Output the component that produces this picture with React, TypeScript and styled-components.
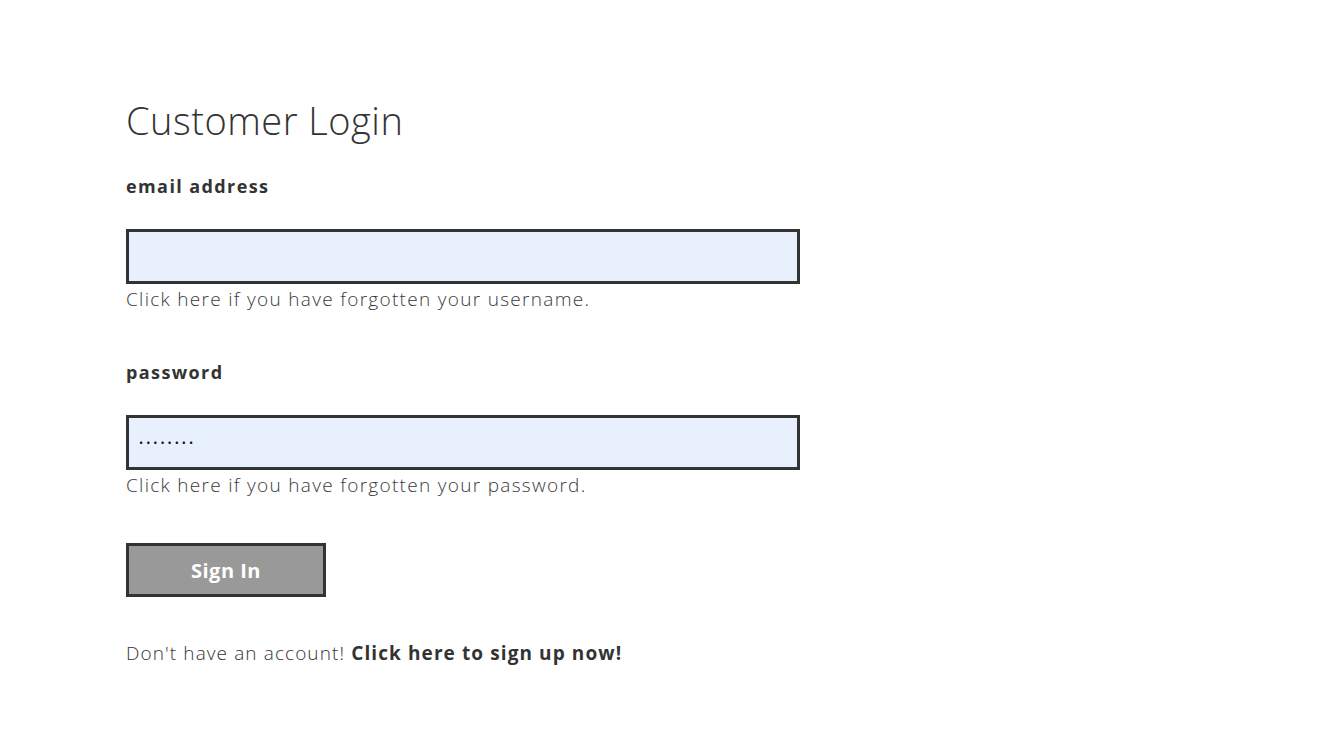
import React from "react";
import styled, { createGlobalStyle } from "styled-components";

const Global = createGlobalStyle`
  html, body { margin: 0; padding: 0; background: #ffffff; }
  body { font-family: "Open Sans", "Lato", sans-serif; color: #333; }
  * { box-sizing: border-box; }
`;

const Page = styled.main`
  padding: 94px 0 0 126px;
  width: 1328px;
  min-height: 744px;
`;

const Form = styled.form`
  display: flex;
  flex-direction: column;
  align-items: flex-start;
  width: 674px;
`;

const Title = styled.h1`
  margin: 0;
  font-size: 38px;
  font-weight: 300;
  line-height: 52px;
  letter-spacing: 0.5px;
  color: #333;
`;

const Label = styled.label<{ $top: number }>`
  display: block;
  margin-top: ${(p) => p.$top}px;
  font-size: 18px;
  font-weight: 700;
  line-height: 24px;
  letter-spacing: 1.4px;
  color: #333;
`;

const Input = styled.input<{ $secret?: boolean }>`
  display: block;
  margin-top: 31px;
  width: 674px;
  height: 55px;
  border: 3px solid #333;
  background: #e8f0fe;
  padding: 0 10px;
  font-family: inherit;
  font-size: ${(p) => (p.$secret ? "11px" : "18px")};
  letter-spacing: ${(p) => (p.$secret ? "3px" : "0")};
  color: #111;
  outline: none;
`;

const Helper = styled.a`
  display: block;
  font-size: 19px;
  font-weight: 300;
  line-height: 30px;
  letter-spacing: 1.3px;
  color: #3a3a3a;
  text-decoration: none;
  cursor: pointer;
`;

const Button = styled.button`
  margin-top: 43px;
  width: 200px;
  height: 54px;
  border: 3px solid #333;
  background: #999;
  color: #fff;
  font-family: inherit;
  font-size: 20px;
  font-weight: 700;
  letter-spacing: 0.5px;
  cursor: pointer;
`;

const Footer = styled.p`
  margin: 42px 0 0;
  font-size: 19px;
  font-weight: 300;
  line-height: 28px;
  letter-spacing: 1.1px;
  color: #333;
`;

const Strong = styled.a`
  font-weight: 700;
  color: #333;
  text-decoration: none;
`;

export default function App() {
  return (
    <>
      <Global />
      <Page>
        <Form onSubmit={(e) => e.preventDefault()}>
          <Title>Customer Login</Title>
          <Label $top={28}>email address</Label>
          <Input type="email" defaultValue="" />
          <Helper>Click here if you have forgotten your username.</Helper>
          <Label $top={46}>password</Label>
          <Input type="password" $secret defaultValue="12345678" />
          <Helper>Click here if you have forgotten your password.</Helper>
          <Button type="submit">Sign In</Button>
          <Footer>
            Don't have an account! <Strong>Click here to sign up now!</Strong>
          </Footer>
        </Form>
      </Page>
    </>
  );
}
